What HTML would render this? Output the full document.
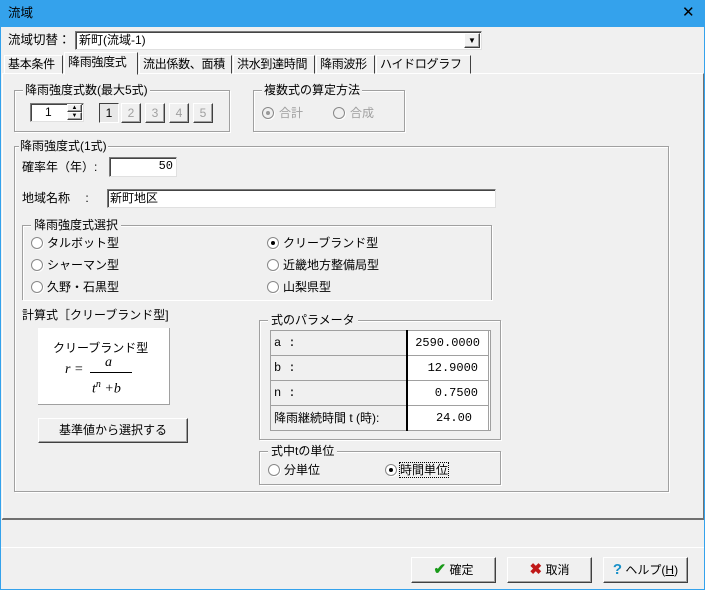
<!DOCTYPE html>
<html><head><meta charset="utf-8"><style>
*{box-sizing:border-box;margin:0;padding:0}
body{width:705px;height:590px;background:#f0f0f0;font-family:"Liberation Sans","Noto Sans CJK JP",sans-serif;font-size:12px;color:#000;position:relative;overflow:hidden}
.a{position:absolute;white-space:nowrap;line-height:14px}
.title{left:0;top:0;width:705px;height:27px;background:#34a2ec}
.frame{left:0;top:0;width:705px;height:590px;border:1px solid #34a2ec;border-top:none}
.grp{position:absolute;border:1px solid #a0a0a0;box-shadow:1px 1px 0 #fff inset,1px 1px 0 #fff}
.gl{position:absolute;top:-8px;left:8px;background:#f0f0f0;padding:0 2px;line-height:14px;white-space:nowrap}
.inp{position:absolute;background:#fff;border:1px solid #7a7a7a;border-right-color:#e0e0e0;border-bottom-color:#e0e0e0;box-shadow:1px 1px 0 #444 inset;line-height:16px;padding:0 3px;white-space:nowrap}
.btn{position:absolute;background:#f0f0f0;border:1px solid;border-color:#fff #404040 #404040 #fff;box-shadow:-1px -1px 0 #a0a0a0 inset;text-align:center;white-space:nowrap}
.tab{position:absolute;top:55px;height:19px;border:1px solid;border-color:#fff #404040 transparent #fff;line-height:17px;padding-left:3px;font-size:12px;white-space:nowrap;overflow:hidden;letter-spacing:-0.3px}
.r{position:absolute;width:12px;height:12px;border-radius:50%;background:#fff;border:1px solid #888;box-shadow:1px 1px 0 #fff}
.r.on::after{content:"";position:absolute;left:3px;top:3px;width:4px;height:4px;border-radius:50%;background:#000}
.r.dis{background:#f0f0f0}
.r.dis.on::after{background:#999}
td{border:1px solid #a0a0a0;height:25px;padding:0 3px;font-family:"Liberation Mono","Noto Sans CJK JP",monospace;font-size:12px;white-space:nowrap}
</style></head><body>
<div class="a title"></div>
<div class="a" style="left:8px;top:6px;color:#000;font-size:12.5px">流域</div>
<div class="a" style="left:682px;top:5px;font-size:15px;font-family:'DejaVu Sans',sans-serif">✕</div>
<div class="a frame"></div>

<div class="a" style="left:8px;top:33px;font-size:12.5px">流域切替：</div>
<div class="inp" style="left:75px;top:31px;width:407px;height:19px">新町(流域-1)</div>
<div class="btn" style="left:464px;top:33px;width:16px;height:15px;font-size:8px;line-height:13px">▼</div>

<div class="a" style="left:2px;top:73px;width:702px;height:446px;border:1px solid;border-color:#fff #707070 #707070 #fff;box-shadow:0 1px 0 #707070"></div>
<div class="tab" style="left:4px;width:59px">基本条件</div>
<div class="tab" style="left:64px;top:52px;height:23px;width:74px;background:#f0f0f0;z-index:2;line-height:19px">降雨強度式</div>
<div class="tab" style="left:139px;width:93px">流出係数、面積</div>
<div class="tab" style="left:233px;width:82px">洪水到達時間</div>
<div class="tab" style="left:316px;width:59px">降雨波形</div>
<div class="tab" style="left:376px;width:95px">ハイドログラフ</div>

<div class="grp" style="left:14px;top:90px;width:216px;height:42px"><span class="gl" style="left:8px">降雨強度式数(最大5式)</span></div>
<div class="inp" style="left:30px;top:103px;width:54px;height:19px;padding-left:14px">1</div>
<div class="btn" style="left:67px;top:104px;width:15px;height:8px;font-size:6px;line-height:6px">▲</div>
<div class="btn" style="left:67px;top:112px;width:15px;height:8px;font-size:6px;line-height:6px">▼</div>
<div class="btn" style="left:99px;top:103px;width:20px;height:20px;line-height:18px;background:#e8e8e8;border-color:#404040 #fff #fff #404040;box-shadow:none">1</div>
<div class="btn" style="left:121px;top:103px;width:20px;height:20px;line-height:18px;color:#a0a0a0">2</div>
<div class="btn" style="left:145px;top:103px;width:20px;height:20px;line-height:18px;color:#a0a0a0">3</div>
<div class="btn" style="left:169px;top:103px;width:20px;height:20px;line-height:18px;color:#a0a0a0">4</div>
<div class="btn" style="left:193px;top:103px;width:20px;height:20px;line-height:18px;color:#a0a0a0">5</div>

<div class="grp" style="left:253px;top:90px;width:152px;height:42px"><span class="gl">複数式の算定方法</span></div>
<div class="r dis on" style="left:262px;top:107px"></div><div class="a" style="left:279px;top:106px;color:#a0a0a0">合計</div>
<div class="r dis" style="left:333px;top:107px"></div><div class="a" style="left:350px;top:106px;color:#a0a0a0">合成</div>

<div class="grp" style="left:14px;top:146px;width:655px;height:346px"><span class="gl" style="left:4px;padding:0 1px">降雨強度式(1式)</span></div>
<div class="a" style="left:22px;top:160px">確率年（年）:</div>
<div class="inp" style="left:109px;top:157px;width:68px;height:20px;text-align:right;font-family:'Liberation Mono',monospace">50</div>
<div class="a" style="left:22px;top:191px">地域名称　 :</div>
<div class="inp" style="left:107px;top:189px;width:389px;height:19px;padding-left:2px">新町地区</div>

<div class="grp" style="left:22px;top:225px;width:470px;height:75px;border-bottom:none"><span class="gl" style="left:8px;padding:0 3px">降雨強度式選択</span></div>
<div class="r" style="left:31px;top:237px"></div><div class="a" style="left:47px;top:236px">タルボット型</div>
<div class="r" style="left:31px;top:259px"></div><div class="a" style="left:47px;top:258px">シャーマン型</div>
<div class="r" style="left:31px;top:281px"></div><div class="a" style="left:47px;top:280px">久野・石黒型</div>
<div class="r on" style="left:267px;top:237px"></div><div class="a" style="left:283px;top:236px">クリーブランド型</div>
<div class="r" style="left:267px;top:259px"></div><div class="a" style="left:283px;top:258px">近畿地方整備局型</div>
<div class="r" style="left:267px;top:281px"></div><div class="a" style="left:283px;top:280px">山梨県型</div>

<div class="a" style="left:22px;top:308px">計算式［クリーブランド型]</div>
<div class="a" style="left:38px;top:328px;width:132px;height:77px;background:#fff;border-right:1px solid #a0a0a0;border-bottom:1px solid #a0a0a0"></div>
<div class="a" style="left:53px;top:341px">クリーブランド型</div>
<div class="a" style="left:65px;top:363px;font-family:'Liberation Serif',serif;font-style:italic;font-size:14px">r =</div>
<div class="a" style="left:90px;top:372px;width:42px;border-top:1px solid #000"></div>
<div class="a" style="left:105px;top:356px;font-family:'Liberation Serif',serif;font-style:italic;font-size:14px">a</div>
<div class="a" style="left:92px;top:378px;font-family:'Liberation Serif',serif;font-style:italic;font-size:14px">t<sup style="font-size:10px">n</sup> +b</div>

<div class="btn" style="left:38px;top:418px;width:150px;height:25px;line-height:23px">基準値から選択する</div>

<div class="grp" style="left:259px;top:320px;width:242px;height:120px"><span class="gl" style="left:8px;padding:0 3px">式のパラメータ</span></div>
<div class="a" style="left:270px;top:330px;width:221px;height:101px;background:#fff;border:1px solid #a0a0a0"></div>
<table class="a" style="left:270px;top:330px;border-collapse:collapse;width:219px">
<tr><td style="width:136px;background:#f0f0f0;border-right:2px solid #000">a :</td><td style="text-align:right;padding-right:8px">2590.0000</td></tr>
<tr><td style="background:#f0f0f0;border-right:2px solid #000">b :</td><td style="text-align:right;padding-right:10px">12.9000</td></tr>
<tr><td style="background:#f0f0f0;border-right:2px solid #000">n :</td><td style="text-align:right;padding-right:10px">0.7500</td></tr>
<tr><td style="background:#f0f0f0;border-right:2px solid #000;font-family:'Liberation Sans','Noto Sans CJK JP',sans-serif">降雨継続時間 t (時):</td><td style="text-align:right;padding-right:16px">24.00</td></tr>
</table>

<div class="grp" style="left:259px;top:451px;width:242px;height:34px"><span class="gl" style="left:8px;padding:0 3px">式中tの単位</span></div>
<div class="r" style="left:268px;top:464px"></div><div class="a" style="left:284px;top:463px">分単位</div>
<div class="r on" style="left:385px;top:464px"></div><div class="a" style="left:400px;top:463px;outline:1px dotted #000">時間単位</div>

<div class="a" style="left:1px;top:547px;width:703px;border-top:1px solid #fff"></div>

<div class="btn" style="left:411px;top:557px;width:85px;height:26px;line-height:24px"><span style="color:#1a9a1a;font-weight:bold;font-size:15px">✔</span> 確定</div>
<div class="btn" style="left:507px;top:557px;width:85px;height:26px;line-height:24px"><span style="color:#c01818;font-weight:bold;font-size:15px">✖</span> 取消</div>
<div class="btn" style="left:603px;top:557px;width:85px;height:26px;line-height:24px"><span style="color:#1890c8;font-weight:bold;font-size:15px">?</span> ヘルプ(<u>H</u>)</div>
</body></html>
